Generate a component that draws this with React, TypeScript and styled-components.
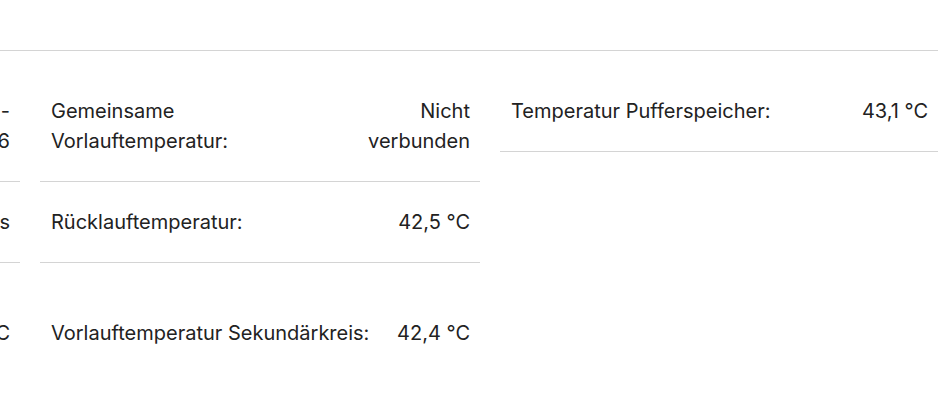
import React from 'react';
import styled, { createGlobalStyle } from 'styled-components';

const GlobalStyle = createGlobalStyle`
  html, body {
    margin: 0;
    padding: 0;
    background: #ffffff;
    overflow: hidden;
  }
  body {
    font-family: Inter, "Noto Sans", "Liberation Sans", sans-serif;
    color: #222222;
  }
`;

const Page = styled.div`
  width: 945px;
  height: 415px;
  overflow: hidden;
  padding-top: 50px;
  padding-right: 7px;
  box-sizing: border-box;
`;

const Section = styled.section`
  border-top: 1px solid #d4d4d4;
  padding-top: 20px;
  margin-left: -420px;
  display: flex;
  gap: 20px;
  align-items: flex-start;
`;

const Table = styled.div`
  display: grid;
  grid-template-columns: 440px 440px;
  grid-auto-flow: column;
  grid-template-rows: repeat(3, auto);
  column-gap: 20px;
`;

const Side = styled.div`
  width: 438px;
  display: flex;
  flex-direction: column;
`;

const Row = styled.div<{ $last?: boolean }>`
  display: flex;
  align-items: center;
  justify-content: space-between;
  gap: 24px;
  padding: 25px 10px 25px 11px;
  border-bottom: 1px solid ${p => (p.$last ? 'transparent' : '#d4d4d4')};
  font-size: 20px;
  line-height: 30px;
`;

const Label = styled.span`
  white-space: pre-line;
`;

const Value = styled.span`
  text-align: right;
  white-space: pre-line;
`;

type Item = { label: string; value: string };

const left: Item[] = [
  { label: 'Betriebsart Heizkreis:', value: 'Absenkbetrieb -\nStufe 6' },
  { label: 'Zirkulationspumpe:', value: 'Aus' },
  { label: 'Vorlauftemperatur\nHeizkreis 1\n(gemischt):', value: '41,8 °C' },
];

const middle: Item[] = [
  { label: 'Gemeinsame Vorlauftemperatur:', value: 'Nicht verbunden' },
  { label: 'Rücklauftemperatur:', value: '42,5 °C' },
  { label: 'Vorlauftemperatur Sekundärkreis:', value: '42,4 °C' },
];

const right: Item[] = [
  { label: 'Temperatur Pufferspeicher:', value: '43,1 °C' },
];

const App: React.FC = () => {
  return (
    <>
      <GlobalStyle />
      <Page>
        <Section>
          <Table>
            {[...left, ...middle].map((item, i) => (
              <Row key={i} $last={i % 3 === 2}>
                <Label>{item.label}</Label>
                <Value>{item.value}</Value>
              </Row>
            ))}
          </Table>
          <Side>
            {right.map((item, i) => (
              <Row key={i}>
                <Label>{item.label}</Label>
                <Value>{item.value}</Value>
              </Row>
            ))}
          </Side>
        </Section>
      </Page>
    </>
  );
};

export default App;
